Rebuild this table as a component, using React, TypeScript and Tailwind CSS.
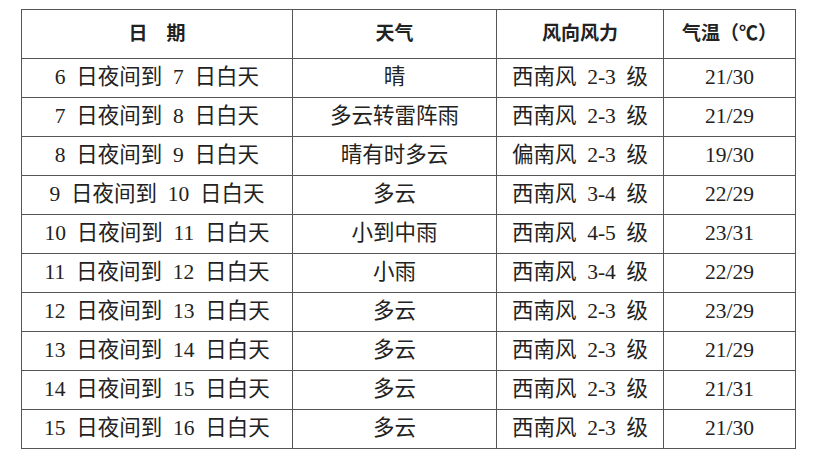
const rows: [string, string, string, string][] = [
  ["6 日夜间到 7 日白天", "晴", "西南风 2-3 级", "21/30"],
  ["7 日夜间到 8 日白天", "多云转雷阵雨", "西南风 2-3 级", "21/29"],
  ["8 日夜间到 9 日白天", "晴有时多云", "偏南风 2-3 级", "19/30"],
  ["9 日夜间到 10 日白天", "多云", "西南风 3-4 级", "22/29"],
  ["10 日夜间到 11 日白天", "小到中雨", "西南风 4-5 级", "23/31"],
  ["11 日夜间到 12 日白天", "小雨", "西南风 3-4 级", "22/29"],
  ["12 日夜间到 13 日白天", "多云", "西南风 2-3 级", "23/29"],
  ["13 日夜间到 14 日白天", "多云", "西南风 2-3 级", "21/29"],
  ["14 日夜间到 15 日白天", "多云", "西南风 2-3 级", "21/31"],
  ["15 日夜间到 16 日白天", "多云", "西南风 2-3 级", "21/30"],
];

const font = "font-['Liberation_Serif','Noto_Sans_CJK_SC',serif]";

// half-width spaces like the original Song typeface
const half = (s: string) => s.replace(/ /g, "\u2002");

export default function App() {
  return (
    <div className={`w-[827px] h-[456px] bg-white pl-[21px] pt-[9px] ${font}`}>
      <table className="border-collapse table-fixed w-[774px] text-[#222]">
        <colgroup>
          <col className="w-[271px]" />
          <col className="w-[204px]" />
          <col className="w-[167px]" />
          <col className="w-[132px]" />
        </colgroup>
        <thead>
          <tr className="h-[49px]">
            <th className="border border-[#555] text-[19px] font-bold text-center">日&emsp;期</th>
            <th className="border border-[#555] text-[19px] font-bold text-center">天气</th>
            <th className="border border-[#555] text-[19px] font-bold text-center">风向风力</th>
            <th className="border border-[#555] text-[19px] font-bold text-center">气温（℃）</th>
          </tr>
        </thead>
        <tbody>
          {rows.map((r, i) => (
            <tr key={i} className="h-[39px]">
              {r.map((c, j) => (
                <td
                  key={j}
                  className="border border-[#555] text-[21.5px] leading-none text-center align-middle whitespace-nowrap"
                >
                  {half(c)}
                </td>
              ))}
            </tr>
          ))}
        </tbody>
      </table>
    </div>
  );
}
